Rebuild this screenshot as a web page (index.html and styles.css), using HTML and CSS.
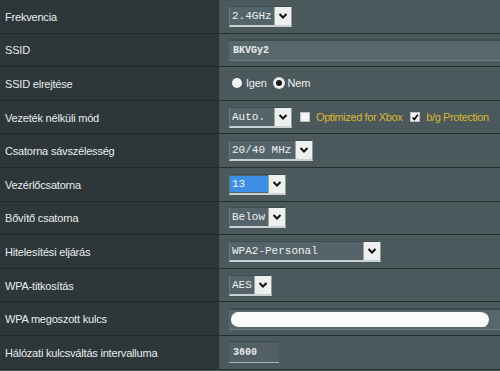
FILE: index.html
```html
<!DOCTYPE html>
<html lang="hu">
<head>
<meta charset="utf-8">
<title>Vezeték nélküli beállítások</title>
<link rel="stylesheet" href="styles.css">
</head>
<body>
<div class="form">
  <div class="row">
    <div class="label">Frekvencia</div>
    <div class="field">
      <div class="select w-freq"><span class="val">2.4GHz</span><span class="arrow"><svg viewBox="0 0 10 8" class="chev"><path d="M1.5 2 L5 5.5 L8.5 2"/></svg></span></div>
    </div>
  </div>
  <div class="row">
    <div class="label">SSID</div>
    <div class="field">
      <div class="input wide"><span class="ival">BKVGy2</span></div>
    </div>
  </div>
  <div class="row">
    <div class="label">SSID elrejtése</div>
    <div class="field">
      <span class="radio"></span><span class="opt">Igen</span>
      <span class="radio on"></span><span class="opt">Nem</span>
    </div>
  </div>
  <div class="row">
    <div class="label">Vezeték nélküli mód</div>
    <div class="field">
      <div class="select w-auto"><span class="val">Auto.</span><span class="arrow"><svg viewBox="0 0 10 8" class="chev"><path d="M1.5 2 L5 5.5 L8.5 2"/></svg></span></div>
      <span class="check"></span><span class="yellow">Optimized for Xbox</span>
      <span class="check on"><svg viewBox="0 0 10 10" class="tick"><path d="M2 5 L4.2 7.5 L8.5 1.5"/></svg></span><span class="yellow">b/g Protection</span>
    </div>
  </div>
  <div class="row">
    <div class="label">Csatorna sávszélesség</div>
    <div class="field">
      <div class="select w-bw"><span class="val">20/40 MHz</span><span class="arrow"><svg viewBox="0 0 10 8" class="chev"><path d="M1.5 2 L5 5.5 L8.5 2"/></svg></span></div>
    </div>
  </div>
  <div class="row">
    <div class="label">Vezérlőcsatorna</div>
    <div class="field">
      <div class="select w-ch"><span class="val hl">13</span><span class="arrow"><svg viewBox="0 0 10 8" class="chev"><path d="M1.5 2 L5 5.5 L8.5 2"/></svg></span></div>
    </div>
  </div>
  <div class="row">
    <div class="label">Bővítő csatorna</div>
    <div class="field">
      <div class="select w-ch"><span class="val">Below</span><span class="arrow"><svg viewBox="0 0 10 8" class="chev"><path d="M1.5 2 L5 5.5 L8.5 2"/></svg></span></div>
    </div>
  </div>
  <div class="row">
    <div class="label">Hitelesítési eljárás</div>
    <div class="field">
      <div class="select w-auth"><span class="val">WPA2-Personal</span><span class="arrow"><svg viewBox="0 0 10 8" class="chev"><path d="M1.5 2 L5 5.5 L8.5 2"/></svg></span></div>
    </div>
  </div>
  <div class="row">
    <div class="label">WPA-titkosítás</div>
    <div class="field">
      <div class="select w-aes"><span class="val">AES</span><span class="arrow"><svg viewBox="0 0 10 8" class="chev"><path d="M1.5 2 L5 5.5 L8.5 2"/></svg></span></div>
    </div>
  </div>
  <div class="row">
    <div class="label">WPA megoszott kulcs</div>
    <div class="field">
      <div class="input wide"><span class="blob"></span></div>
    </div>
  </div>
  <div class="row">
    <div class="label">Hálózati kulcsváltás intervalluma</div>
    <div class="field">
      <div class="input short"><span class="ival">3600</span></div>
    </div>
  </div>
</div>
</body>
</html>
```

FILE: styles.css
```css
html, body {
  margin: 0;
  padding: 0;
  background: #4a585c;
  overflow: hidden;
}

.form {
  width: 500px;
  height: 371px;
  display: flex;
  flex-direction: column;
}

.row {
  display: grid;
  grid-template-columns: 219px 1fr;
  height: 33.6px;
  box-sizing: border-box;
  border-bottom: 1px solid #222b2e;
  flex: none;
}

.label {
  background: #2d373a;
  border-right: 1px solid #273034;
  color: #e9ecec;
  font-family: "Liberation Sans", Arial, sans-serif;
  font-size: 11px;
  letter-spacing: -0.2px;
  display: flex;
  align-items: center;
  padding-left: 5px;
  padding-top: 1px;
  white-space: nowrap;
}

.field {
  background: #4b595d;
  display: flex;
  align-items: center;
  padding-left: 10px;
  overflow: hidden;
  font-family: "Liberation Sans", Arial, sans-serif;
  font-size: 11px;
  letter-spacing: -0.2px;
  color: #e9ecec;
  white-space: nowrap;
}

.select {
  display: flex;
  align-items: stretch;
  height: 21px;
  box-sizing: border-box;
  background: #55646a;
  border-top: 1px solid #3f4c50;
  border-left: 1px solid #6c7a7e;
  border-bottom: 2px solid #c9d1d3;
  border-right: 1px solid #8c989b;
  flex: none;
}

.val {
  font-family: "Liberation Mono", "Courier New", monospace;
  font-size: 11px;
  letter-spacing: 0;
  color: #eef1f1;
  display: flex;
  align-items: center;
  padding-left: 2px;
  flex: 1;
}

.val.hl {
  background: #3d8fe6;
  color: #f2f6ff;
  margin: 1px 0 1px 0;
}

.arrow {
  width: 16px;
  background: #eef0f0;
  border-left: 1px solid #9aa5a8;
  display: flex;
  align-items: center;
  justify-content: center;
  flex: none;
}

.chev {
  width: 10px;
  height: 8px;
}

.chev path {
  fill: none;
  stroke: #111;
  stroke-width: 2;
}

.w-freq { width: 63px; }
.w-auto { width: 63px; }
.w-bw { width: 84px; }
.w-ch { width: 57px; }
.w-auth { width: 152px; }
.w-aes { width: 43px; }

.input {
  height: 22px;
  box-sizing: border-box;
  background: #58676c;
  border-top: 2px solid #3d4a4e;
  border-bottom: 1px solid #6f7d81;
  display: flex;
  align-items: center;
  padding-left: 4px;
}

.input.wide {
  flex: 1;
  margin-right: -4px;
}

.input.short {
  width: 50px;
  background: #525f64;
  border-top: 1px solid #3d4a4e;
  border-bottom: 1px solid #aab5b8;
}

.ival {
  font-family: "Liberation Mono", "Courier New", monospace;
  font-size: 10px;
  font-weight: bold;
  letter-spacing: 0;
  color: #e6eaea;
}

.blob {
  display: block;
  width: 258px;
  height: 15px;
  background: #fbfbfb;
  border-radius: 7px 9px 6px 8px / 8px 7px 8px 7px;
  margin-left: -2px;
}

.radio {
  width: 10px;
  height: 10px;
  border-radius: 50%;
  background: #f4f4f4;
  box-sizing: border-box;
  margin-left: 3px;
  margin-right: 4px;
  flex: none;
}

.radio.on {
  border: 2px solid #f0f0f0;
  background: #1a1a1a;
  box-shadow: 0 0 0 1px #dcdcdc;
  margin-left: 7px;
}

.opt {
  color: #eef0f0;
}

.check {
  width: 10px;
  height: 10px;
  background: #f4f4f4;
  border: 1px solid #b9c1c3;
  box-sizing: border-box;
  margin-left: 8px;
  margin-right: 6px;
  flex: none;
  display: flex;
  align-items: center;
  justify-content: center;
}

.tick {
  width: 9px;
  height: 9px;
}

.tick path {
  fill: none;
  stroke: #000;
  stroke-width: 2;
}

.yellow {
  color: #dcb62e;
  letter-spacing: -0.4px;
}
```
